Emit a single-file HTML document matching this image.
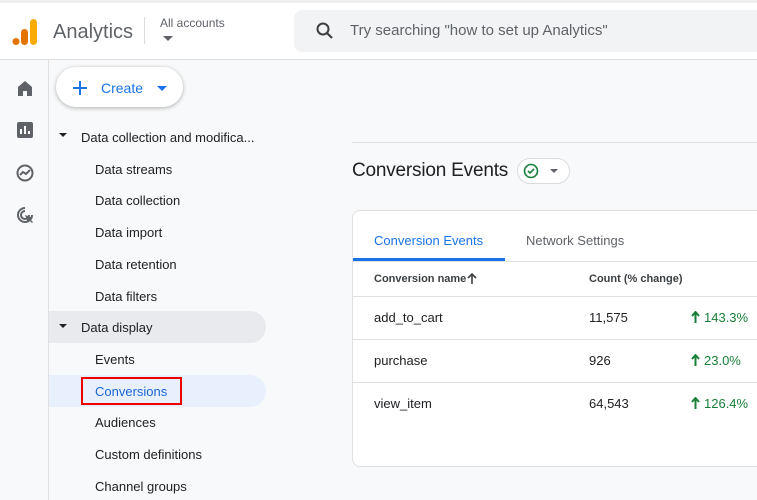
<!DOCTYPE html><html><head><style>
*{margin:0;padding:0;box-sizing:border-box}
body{width:757px;height:500px;overflow:hidden;font-family:"Liberation Sans",sans-serif;background:#f8f9fa;position:relative;color:#202124}
.a{position:absolute}
.nav{position:absolute;left:95px;font-size:13px;color:#202124}
.row{position:absolute;left:353px;right:0;border-top:1px solid #e0e0e0;height:43px}
.row span{position:absolute;top:13px;font-size:13px}
.up{display:inline-block;vertical-align:-1px;margin-right:4px}
</style></head><body>
<div class="a" style="left:0;top:0;width:757px;height:60px;background:#fff;border-top:3px solid #eee;border-bottom:1px solid #e0e0e0"></div>
<svg class="a" style="left:12px;top:18px" width="26" height="28"><rect x="18" y="1" width="7" height="26" rx="3.5" fill="#f9ab00"/><rect x="9" y="11" width="7" height="16" rx="3.5" fill="#e37400"/><circle cx="4" cy="23.5" r="3.5" fill="#e37400"/></svg>
<div class="a" style="left:53px;top:21px;font-size:20px;color:#5f6368">Analytics</div>
<div class="a" style="left:144px;top:17px;width:1px;height:27px;background:#dadce0"></div>
<div class="a" style="left:160px;top:16px;font-size:12px;color:#5f6368">All accounts</div>
<div class="a" style="left:163px;top:36px;border:5px solid transparent;border-top:5px solid #5f6368"></div>
<div class="a" style="left:294px;top:10px;width:470px;height:42px;background:#f1f3f4;border-radius:8px"></div>
<svg class="a" style="left:316px;top:22px" width="18" height="18"><circle cx="7" cy="7" r="5.5" stroke="#3c4043" stroke-width="2" fill="none"/><path d="M11 11l5 5" stroke="#3c4043" stroke-width="2.2"/></svg>
<div class="a" style="left:350px;top:22px;font-size:15px;color:#5f6368">Try searching "how to set up Analytics"</div>
<div class="a" style="left:48px;top:60px;width:1px;height:440px;background:#e0e0e0"></div>
<svg class="a" style="left:16px;top:79px" width="18" height="18"><path d="M2 8L9 2l7 6v9h-5v-5H7v5H2z" fill="#5f6368"/></svg>
<svg class="a" style="left:16px;top:121px" width="18" height="18"><rect x="1" y="1" width="16" height="16" rx="2" fill="#5f6368"/><path d="M5 13V8M9 13V5M13 13v-3" stroke="#fff" stroke-width="2"/></svg>
<svg class="a" style="left:15px;top:163px" width="20" height="20"><circle cx="10" cy="10" r="7.5" stroke="#5f6368" stroke-width="2" fill="none"/><path d="M5 12l3-3 3 2 4-4" stroke="#5f6368" stroke-width="2" fill="none"/></svg>
<svg class="a" style="left:15px;top:205px" width="20" height="20"><path d="M10 3a7 7 0 1 0 7 7M10 6a4 4 0 1 0 4 4" stroke="#5f6368" stroke-width="2" fill="none"/><path d="M10 10l8 3-3 1 3 3-1 1-3-3-1 3z" fill="#5f6368"/></svg>
<div class="a" style="left:56px;top:67px;width:127px;height:40px;background:#fff;border-radius:20px;box-shadow:0 1px 4px rgba(0,0,0,.3)"></div>
<svg class="a" style="left:72px;top:80px" width="16" height="16"><path d="M8 1v14M1 8h14" stroke="#1a73e8" stroke-width="2"/></svg>
<div class="a" style="left:101px;top:80px;font-size:14px;color:#1a73e8">Create</div>
<div class="a" style="left:157px;top:86px;border:5px solid transparent;border-top:5px solid #1a73e8"></div>
<div class="a" style="left:59px;top:133px;border:4px solid transparent;border-top:4px solid #202124"></div>
<div class="nav" style="left:81px;top:130px">Data collection and modifica...</div>
<div class="nav" style="top:162px">Data streams</div>
<div class="nav" style="top:193px">Data collection</div>
<div class="nav" style="top:225px">Data import</div>
<div class="nav" style="top:257px">Data retention</div>
<div class="nav" style="top:289px">Data filters</div>
<div class="a" style="left:49px;top:311px;width:217px;height:32px;background:#e8eaed;border-radius:0 16px 16px 0"></div>
<div class="a" style="left:59px;top:324px;border:4px solid transparent;border-top:4px solid #202124"></div>
<div class="nav" style="left:81px;top:320px">Data display</div>
<div class="nav" style="top:352px">Events</div>
<div class="a" style="left:49px;top:375px;width:217px;height:32px;background:#e8f0fe;border-radius:0 16px 16px 0"></div>
<div class="a" style="left:81px;top:377px;width:101px;height:28px;border:2px solid #e00"></div>
<div class="nav" style="top:384px;color:#1967d2">Conversions</div>
<div class="nav" style="top:415px">Audiences</div>
<div class="nav" style="top:447px">Custom definitions</div>
<div class="nav" style="top:479px">Channel groups</div>
<div class="a" style="left:352px;top:142px;width:405px;height:1px;background:#e0e0e0"></div>
<div class="a" style="left:352px;top:160px;font-size:19px;letter-spacing:-0.2px;color:#202124">Conversion Events</div>
<div class="a" style="left:517px;top:158px;width:53px;height:26px;border:1px solid #dadce0;border-radius:13px;background:#fff"></div>
<svg class="a" style="left:523px;top:163px" width="16" height="16"><circle cx="8" cy="8" r="6.5" stroke="#188038" stroke-width="1.6" fill="none"/><path d="M5 8l2 2 4-4" stroke="#188038" stroke-width="1.6" fill="none"/></svg>
<div class="a" style="left:550px;top:169px;border:4px solid transparent;border-top:4px solid #5f6368"></div>
<div class="a" style="left:352px;top:210px;width:420px;height:257px;background:#fff;border:1px solid #e0e0e0;border-radius:8px"></div>
<div class="a" style="left:374px;top:233px;font-size:13px;color:#1a73e8">Conversion Events</div>
<div class="a" style="left:526px;top:233px;font-size:13px;color:#5f6368">Network Settings</div>
<div class="a" style="left:353px;top:258px;width:152px;height:3px;background:#1a73e8"></div>
<div class="row" style="top:261px"><span style="left:21px;top:11px;font-size:11px;font-weight:bold;color:#3c4043">Conversion name</span><svg class="a" style="left:114px;top:11px" width="10" height="11"><path d="M5 11V2M1 5l4-4 4 4" stroke="#3c4043" stroke-width="1.6" fill="none"/></svg><span style="left:236px;top:11px;font-size:11px;font-weight:bold;color:#3c4043">Count (% change)</span></div>
<div class="row" style="top:296px"><span style="left:21px">add_to_cart</span><span style="left:236px">11,575</span><span style="left:338px;color:#188038"><svg class="up" width="9" height="12"><path d="M4.5 12V2M1 5l3.5-4 3.5 4" stroke="#188038" stroke-width="2" fill="none"/></svg>143.3%</span></div>
<div class="row" style="top:339px"><span style="left:21px">purchase</span><span style="left:236px">926</span><span style="left:338px;color:#188038"><svg class="up" width="9" height="12"><path d="M4.5 12V2M1 5l3.5-4 3.5 4" stroke="#188038" stroke-width="2" fill="none"/></svg>23.0%</span></div>
<div class="row" style="top:382px"><span style="left:21px">view_item</span><span style="left:236px">64,543</span><span style="left:338px;color:#188038"><svg class="up" width="9" height="12"><path d="M4.5 12V2M1 5l3.5-4 3.5 4" stroke="#188038" stroke-width="2" fill="none"/></svg>126.4%</span></div>
</body></html>
